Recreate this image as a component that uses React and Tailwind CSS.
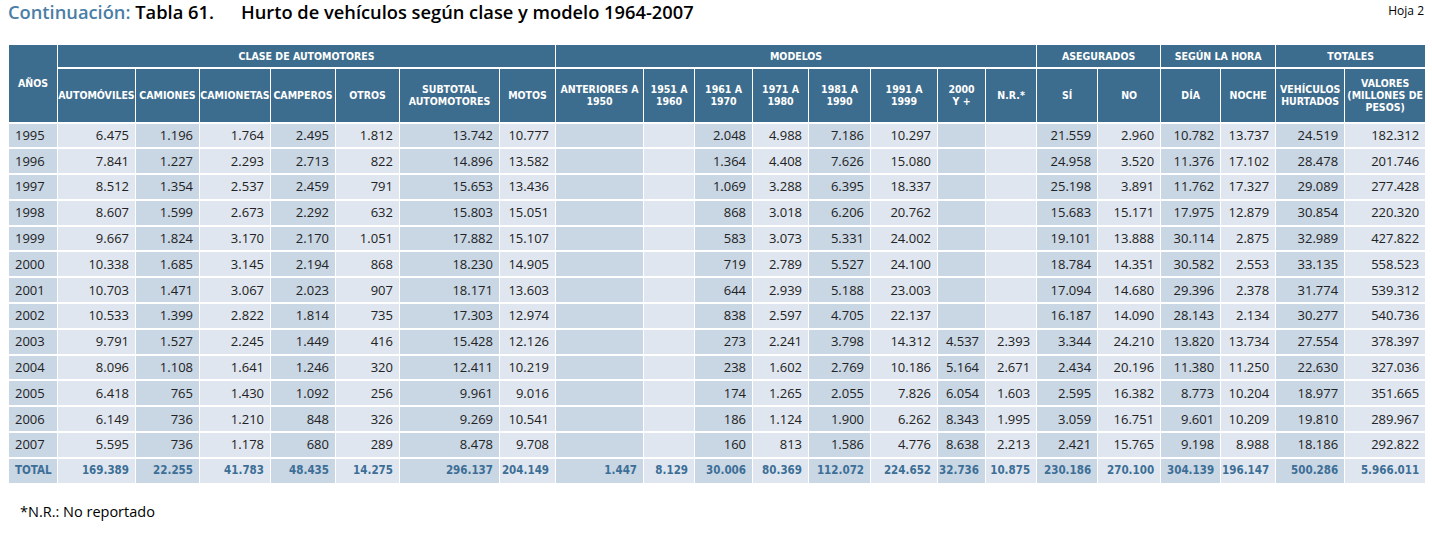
import React from 'react';

const widths = [49, 78, 64, 71, 65, 64, 100, 56, 88, 51, 58, 56, 62, 67, 48, 51, 61, 63, 60, 55, 69, 81];

const subHeaders = [
  ['AUTOMÓVILES'],
  ['CAMIONES'],
  ['CAMIONETAS'],
  ['CAMPEROS'],
  ['OTROS'],
  ['SUBTOTAL', 'AUTOMOTORES'],
  ['MOTOS'],
  ['ANTERIORES A', '1950'],
  ['1951 A', '1960'],
  ['1961 A', '1970'],
  ['1971 A', '1980'],
  ['1981 A', '1990'],
  ['1991 A', '1999'],
  ['2000', 'Y +'],
  ['N.R.*'],
  ['SÍ'],
  ['NO'],
  ['DÍA'],
  ['NOCHE'],
  ['VEHÍCULOS', 'HURTADOS'],
  ['VALORES', '(MILLONES DE', 'PESOS)'],
];

const rows = [
  ['1995', '6.475', '1.196', '1.764', '2.495', '1.812', '13.742', '10.777', '', '', '2.048', '4.988', '7.186', '10.297', '', '', '21.559', '2.960', '10.782', '13.737', '24.519', '182.312'],
  ['1996', '7.841', '1.227', '2.293', '2.713', '822', '14.896', '13.582', '', '', '1.364', '4.408', '7.626', '15.080', '', '', '24.958', '3.520', '11.376', '17.102', '28.478', '201.746'],
  ['1997', '8.512', '1.354', '2.537', '2.459', '791', '15.653', '13.436', '', '', '1.069', '3.288', '6.395', '18.337', '', '', '25.198', '3.891', '11.762', '17.327', '29.089', '277.428'],
  ['1998', '8.607', '1.599', '2.673', '2.292', '632', '15.803', '15.051', '', '', '868', '3.018', '6.206', '20.762', '', '', '15.683', '15.171', '17.975', '12.879', '30.854', '220.320'],
  ['1999', '9.667', '1.824', '3.170', '2.170', '1.051', '17.882', '15.107', '', '', '583', '3.073', '5.331', '24.002', '', '', '19.101', '13.888', '30.114', '2.875', '32.989', '427.822'],
  ['2000', '10.338', '1.685', '3.145', '2.194', '868', '18.230', '14.905', '', '', '719', '2.789', '5.527', '24.100', '', '', '18.784', '14.351', '30.582', '2.553', '33.135', '558.523'],
  ['2001', '10.703', '1.471', '3.067', '2.023', '907', '18.171', '13.603', '', '', '644', '2.939', '5.188', '23.003', '', '', '17.094', '14.680', '29.396', '2.378', '31.774', '539.312'],
  ['2002', '10.533', '1.399', '2.822', '1.814', '735', '17.303', '12.974', '', '', '838', '2.597', '4.705', '22.137', '', '', '16.187', '14.090', '28.143', '2.134', '30.277', '540.736'],
  ['2003', '9.791', '1.527', '2.245', '1.449', '416', '15.428', '12.126', '', '', '273', '2.241', '3.798', '14.312', '4.537', '2.393', '3.344', '24.210', '13.820', '13.734', '27.554', '378.397'],
  ['2004', '8.096', '1.108', '1.641', '1.246', '320', '12.411', '10.219', '', '', '238', '1.602', '2.769', '10.186', '5.164', '2.671', '2.434', '20.196', '11.380', '11.250', '22.630', '327.036'],
  ['2005', '6.418', '765', '1.430', '1.092', '256', '9.961', '9.016', '', '', '174', '1.265', '2.055', '7.826', '6.054', '1.603', '2.595', '16.382', '8.773', '10.204', '18.977', '351.665'],
  ['2006', '6.149', '736', '1.210', '848', '326', '9.269', '10.541', '', '', '186', '1.124', '1.900', '6.262', '8.343', '1.995', '3.059', '16.751', '9.601', '10.209', '19.810', '289.967'],
  ['2007', '5.595', '736', '1.178', '680', '289', '8.478', '9.708', '', '', '160', '813', '1.586', '4.776', '8.638', '2.213', '2.421', '15.765', '9.198', '8.988', '18.186', '292.822'],
];

const totals = ['TOTAL', '169.389', '22.255', '41.783', '48.435', '14.275', '296.137', '204.149', '1.447', '8.129', '30.006', '80.369', '112.072', '224.652', '32.736', '10.875', '230.186', '270.100', '304.139', '196.147', '500.286', '5.966.011'];

const head = "bg-[#3d6d8e] text-white font-bold text-[10.5px] leading-[12px] text-center align-middle border border-white border-b-2 [font-family:'DejaVu_Sans_Condensed','DejaVu_Sans',sans-serif]";

export default function App() {
  return (
    <div className="w-[1432px] h-[548px] bg-white px-2 [font-family:'Open_Sans',sans-serif]">
      <div className="h-[44px] flex justify-between items-start">
        <h1 className="text-[18.3px] font-semibold leading-[24px] text-black">
          <span className="text-[#4a7ea6]">Continuación:</span> Tabla 61.
          <span className="ml-[27px]">Hurto de vehículos según clase y modelo 1964-2007</span>
        </h1>
        <span className="text-[12px] leading-[22px] text-black">Hoja 2</span>
      </div>

      <table className="table-fixed border-collapse w-[1417px]">
        <colgroup>
          {widths.map((w, i) => (
            <col key={i} style={{ width: w }} />
          ))}
        </colgroup>
        <thead>
          <tr className="h-[23px]">
            <th rowSpan={2} className={head}>AÑOS</th>
            <th colSpan={7} className={head}>CLASE DE AUTOMOTORES</th>
            <th colSpan={8} className={head}>MODELOS</th>
            <th colSpan={2} className={head}>ASEGURADOS</th>
            <th colSpan={2} className={head}>SEGÚN LA HORA</th>
            <th colSpan={2} className={head}>TOTALES</th>
          </tr>
          <tr className="h-[55px]">
            {subHeaders.map((lines, i) => (
              <th key={i} className={head}>
                {lines.map((l, j) => (
                  <div key={j} className="whitespace-nowrap">{l}</div>
                ))}
              </th>
            ))}
          </tr>
        </thead>
        <tbody>
          {rows.map((r) => (
            <tr key={r[0]} className="h-[25.8px]">
              {r.map((v, i) => (
                <td
                  key={i}
                  className={`border-x border-y-2 border-white text-[13px] leading-none text-[#222] ${
                    i === 0 ? 'text-left pl-[6px]' : 'text-right pr-[6px]'
                  } ${i % 2 === 0 ? 'bg-[#c9d6e4]' : 'bg-[#dfe6ef]'}`}
                >
                  {v}
                </td>
              ))}
            </tr>
          ))}
          <tr className="h-[25.8px]">
            {totals.map((v, i) => (
              <td
                key={i}
                className={`border-x border-y-2 border-white text-[11.5px] font-bold leading-none text-[#3c6e96] [font-family:'DejaVu_Sans_Condensed','DejaVu_Sans',sans-serif] ${
                  i === 0 ? 'text-left pl-[6px]' : 'text-right pr-[6px]'
                } ${i % 2 === 0 ? 'bg-[#c9d6e4]' : 'bg-[#dfe6ef]'}`}
              >
                {v}
              </td>
            ))}
          </tr>
        </tbody>
      </table>

      <p className="mt-[16px] ml-[12px] text-[14.5px] text-black">*N.R.: No reportado</p>
    </div>
  );
}
